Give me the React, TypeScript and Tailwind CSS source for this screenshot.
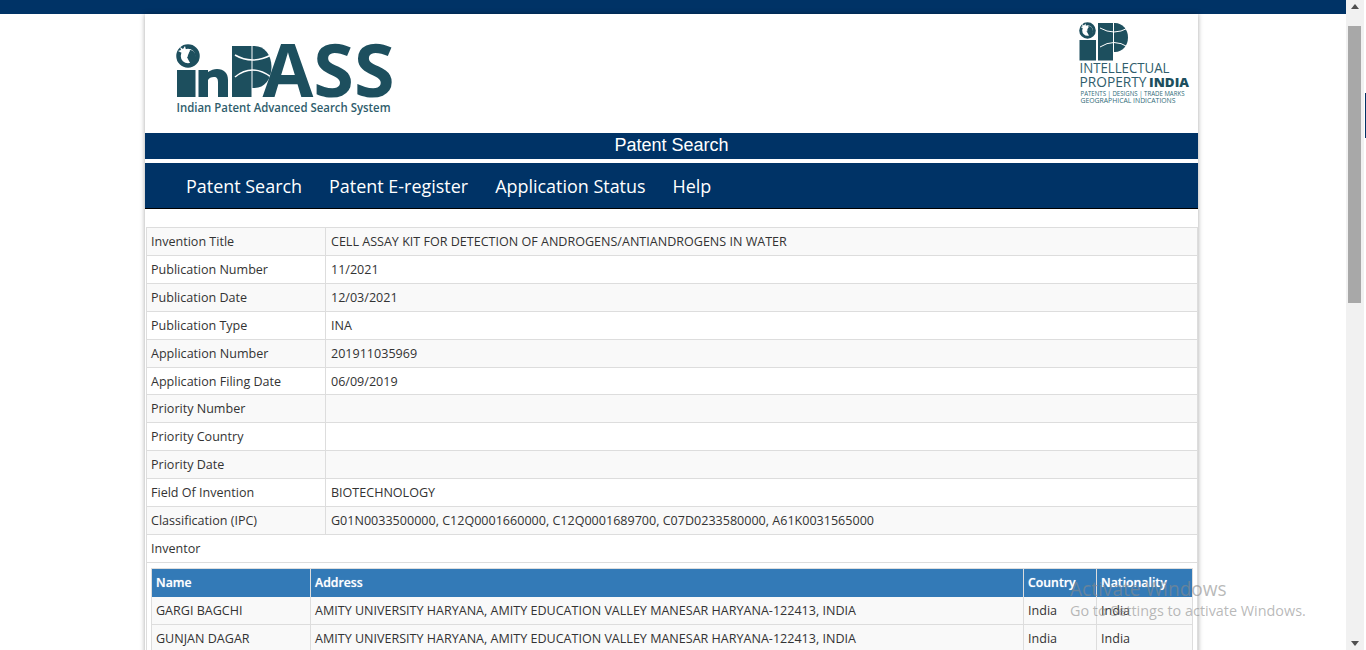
const font = { fontFamily: '"Open Sans", sans-serif' };

const rows: [string, string][] = [
  ["Invention Title", "CELL ASSAY KIT FOR DETECTION OF ANDROGENS/ANTIANDROGENS IN WATER"],
  ["Publication Number", "11/2021"],
  ["Publication Date", "12/03/2021"],
  ["Publication Type", "INA"],
  ["Application Number", "201911035969"],
  ["Application Filing Date", "06/09/2019"],
  ["Priority Number", ""],
  ["Priority Country", ""],
  ["Priority Date", ""],
  ["Field Of Invention", "BIOTECHNOLOGY"],
  ["Classification (IPC)", "G01N0033500000, C12Q0001660000, C12Q0001689700, C07D0233580000, A61K0031565000"],
];

const inventors = ["GARGI BAGCHI", "GUNJAN DAGAR"];
const address = "AMITY UNIVERSITY HARYANA, AMITY EDUCATION VALLEY MANESAR HARYANA-122413, INDIA";

function LeftLogo() {
  const c = "#1d4f5e";
  return (
    <svg width="230" height="80" viewBox="170 40 230 80" className="block">
      <circle cx="188" cy="56" r="9.500" fill="none" stroke={c} strokeWidth="4.500" />
      <path d="M190 50c4 0 6 4 6 8 0 3-2 6-5 7-1-3-3-5-4-8 1-2 2-4 3-7z" fill={c} />
      <path d="M180 47l3 2 2-3 1 4 4 1-3 2 1 4-3-2-3 2 0-4-4-2 3-1z" fill="#fff" />
      <rect x="177" y="70" width="18.500" height="27" fill={c} />
      <path d="M198.500 70h9.500v2c3-2 6-3 9-3 7 0 11 4 11 11v17h-10V82c0-3-1-5-4-5-3 0-5 1-6 3v17h-9.500z" fill={c} />
      <rect x="232" y="46" width="19.500" height="51" fill={c} />
      <path d="M252.500 46h2c10 0 17 9 17 21s-7 21-17 21h-2z" fill={c} />
      <path d="M235 55Q252 65 271 55M235 77Q252 63 271 77" fill="none" stroke="#fff" strokeWidth="1.600" />
      <text x="262.500" y="97" fontFamily='"Open Sans", sans-serif' fontWeight="700" fontSize="73" fill={c} textLength="132" lengthAdjust="spacingAndGlyphs">ASS</text>
      <text x="176.500" y="112" fontFamily='"Open Sans", sans-serif' fontWeight="600" fontSize="12" fill="#2f5d6c" textLength="214" lengthAdjust="spacingAndGlyphs">Indian Patent Advanced Search System</text>
    </svg>
  );
}

function RightLogo() {
  const c = "#1d4f5e";
  return (
    <svg width="116" height="86" viewBox="1076 20 116 86" className="block">
      <circle cx="1087.500" cy="30.500" r="6.800" fill="none" stroke={c} strokeWidth="3" />
      <path d="M1088.500 26c3 0 4.500 3 4.500 5.500 0 2-1.500 4.500-3.500 5-1-2-2-3.500-3-5.500 1-1.500 1.500-3 2-5z" fill={c} />
      <path d="M1082 24l2 1.500 1.500-2 .5 3 3 .5-2 1.500.5 3-2-1.500-2 1.500v-3l-3-1.500 2-.5z" fill="#fff" />
      <rect x="1079.500" y="40" width="16.500" height="20.500" fill={c} />
      <rect x="1098" y="23" width="15" height="37.500" fill={c} />
      <path d="M1114 23h1c7.500 0 13 6.500 13 14.500s-5.500 14.500-13 14.500h-1z" fill={c} />
      <path d="M1100 28Q1114 36 1128 28M1100 47Q1114 38 1128 47" fill="none" stroke="#fff" strokeWidth="1" />
      <text x="1079.500" y="73" fontFamily='"Open Sans", sans-serif' fontWeight="400" fontSize="14" fill="#2f5d6c" textLength="90" lengthAdjust="spacingAndGlyphs">INTELLECTUAL</text>
      <text x="1079.500" y="87" fontFamily='"Open Sans", sans-serif' fontWeight="400" fontSize="14" fill="#2f5d6c" textLength="67" lengthAdjust="spacingAndGlyphs">PROPERTY</text>
      <text x="1149" y="87" fontFamily='"Open Sans", sans-serif' fontWeight="800" fontSize="13" fill={c} textLength="40" lengthAdjust="spacingAndGlyphs">INDIA</text>
      <text x="1080.500" y="96" fontFamily='"Open Sans", sans-serif' fontSize="7.500" fill="#2f6b78" textLength="104" lengthAdjust="spacingAndGlyphs">PATENTS | DESIGNS | TRADE MARKS</text>
      <text x="1080.500" y="103" fontFamily='"Open Sans", sans-serif' fontSize="7.500" fill="#2f6b78" textLength="95" lengthAdjust="spacingAndGlyphs">GEOGRAPHICAL INDICATIONS</text>
    </svg>
  );
}

function Scrollbar() {
  return (
    <div className="w-5 h-[650px] shrink-0 flex bg-white">
      <div className="w-[18px] h-full bg-[#f1f1f1] flex flex-col pl-[2px]">
        <div className="h-[26px] w-[13px] flex justify-center pt-[4px]">
          <div className="w-0 h-0 border-x-[4px] border-x-transparent border-b-[5px] border-b-[#505050]" />
        </div>
        <div className="w-[13px] h-[277px] bg-[#a8a8a8]" />
        <div className="flex-1" />
        <div className="h-[9px] w-[13px] flex justify-center">
          <div className="w-0 h-0 border-x-[4px] border-x-transparent border-t-[5px] border-t-[#505050]" />
        </div>
      </div>
    </div>
  );
}

const cell = "pl-[4px] leading-[27px] truncate";

export default function App() {
  return (
    <div className="relative h-[650px] overflow-hidden flex bg-white text-[#333]" style={font}>
      <div className="flex-1 min-w-0">
        <div className="h-[14px] bg-[#003366]" />
        <div className="w-[1053px] ml-[145px] bg-white shadow-[0_0_5px_rgba(0,0,0,0.35)] h-[700px]">
          <div className="h-[119px] flex justify-between">
            <div className="pl-[25px] pt-[26px]"><LeftLogo /></div>
            <div className="pr-[6px] pt-[6px]"><RightLogo /></div>
          </div>
          <div className="h-[26px] bg-[#003366] text-white text-center text-[18px] leading-[24px] font-['Liberation_Sans',sans-serif]">Patent Search</div>
          <nav className="mt-1 h-[46px] bg-[#003366] border-b border-black flex items-center pl-[41px] pt-[2px] gap-[27px] text-white text-[17.950px]">
            <span>Patent Search</span>
            <span>Patent E-register</span>
            <span>Application Status</span>
            <span>Help</span>
          </nav>
          <div className="mt-[18px] ml-px border border-[#ddd] text-[12.560px]">
            {rows.map(([k, v], i) => (
              <div key={k} className={`flex h-[27.910px] border-b border-[#ddd] ${i % 2 === 0 ? "bg-[#f9f9f9]" : "bg-white"}`}>
                <div className={`w-[179px] border-r border-[#ddd] ${cell}`}>{k}</div>
                <div className={`flex-1 pl-[5px] leading-[27px]`}>{v}</div>
              </div>
            ))}
            <div className={`h-[27.910px] border-b border-[#ddd] ${cell}`}>Inventor</div>
            <div className="px-[4px] pt-[5px]">
              <div className="border border-[#ddd]">
                <div className="flex h-[28px] bg-[#337ab7] text-white font-semibold text-[12.300px] [text-shadow:0_0_1px_rgba(255,255,255,0.6)]">
                  <div className={`w-[159px] border-r border-[#ddd] ${cell}`}>Name</div>
                  <div className={`w-[713px] border-r border-[#ddd] ${cell}`}>Address</div>
                  <div className={`w-[73px] border-r border-[#ddd] ${cell}`}>Country</div>
                  <div className={`flex-1 ${cell}`}>Nationality</div>
                </div>
                {inventors.map((n) => (
                  <div key={n} className="flex h-[28px] border-b border-[#ddd] bg-[#f9f9f9]">
                    <div className={`w-[159px] border-r border-[#ddd] ${cell}`}>{n}</div>
                    <div className={`w-[713px] border-r border-[#ddd] ${cell}`}>{address}</div>
                    <div className={`w-[73px] border-r border-[#ddd] ${cell}`}>India</div>
                    <div className={`flex-1 ${cell}`}>India</div>
                  </div>
                ))}
              </div>
            </div>
          </div>
        </div>
      </div>
      <Scrollbar />
      <div className="absolute left-[1365px] top-[93px] w-px h-[45px] bg-[#003366]" />
      <div className="absolute left-[1070px] top-[578px] text-[#8a8a8a]/60 pointer-events-none">
        <div className="text-[19.100px] leading-[22px]">Activate Windows</div>
        <div className="text-[14.400px] leading-[20px] mt-[1px]">Go to Settings to activate Windows.</div>
      </div>
    </div>
  );
}
